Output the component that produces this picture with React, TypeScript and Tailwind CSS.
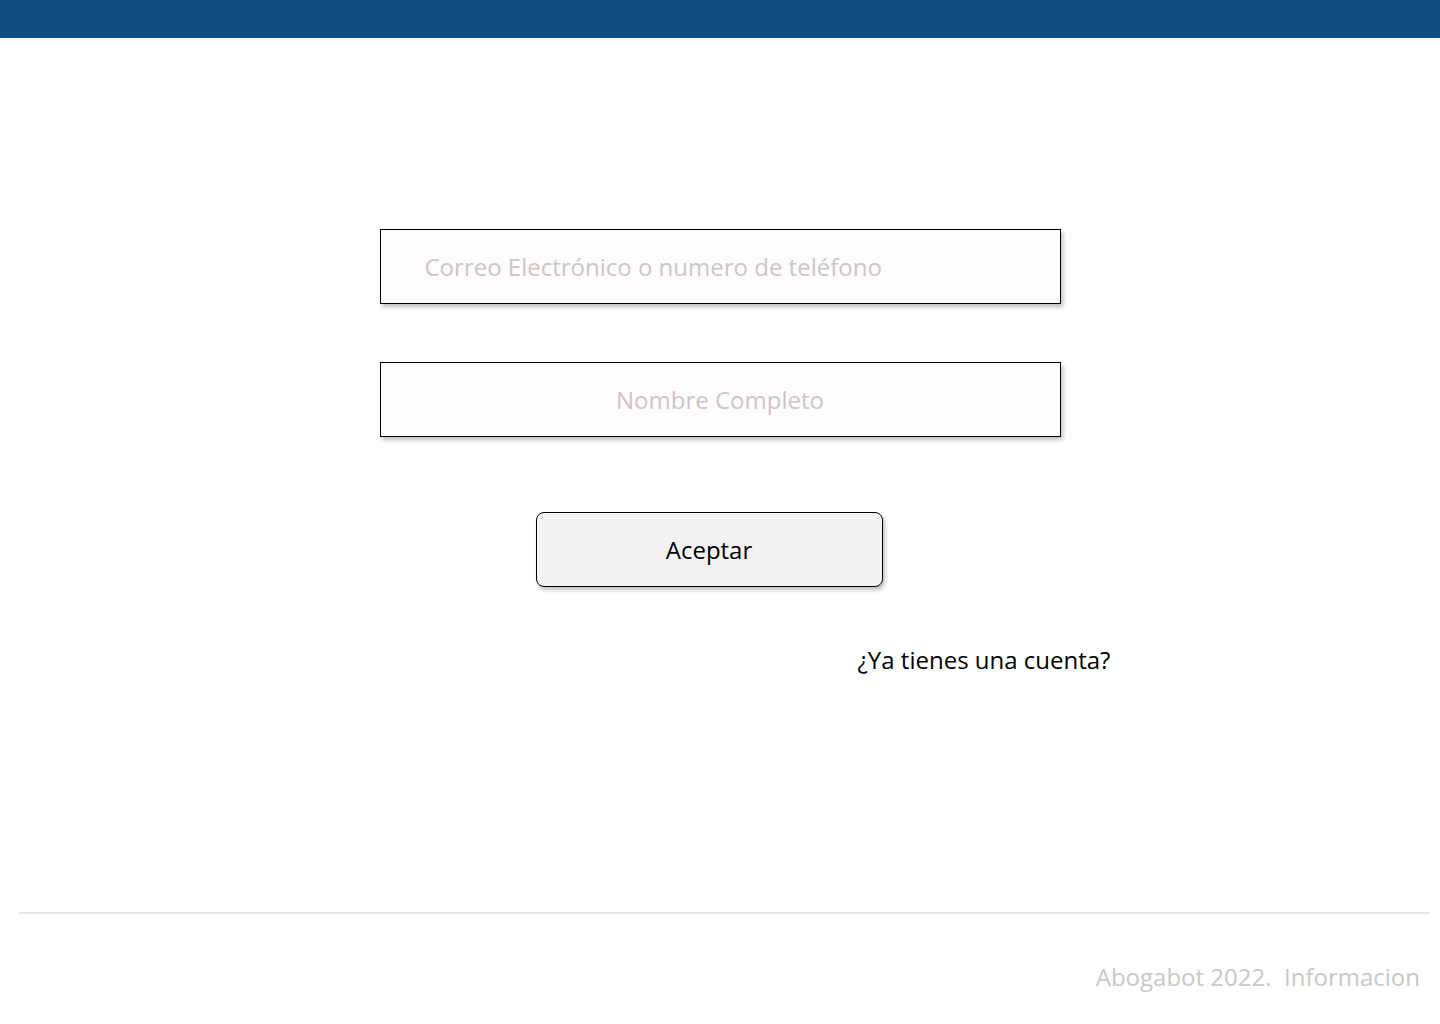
export default function App() {
  return (
    <div className="min-h-screen bg-white font-['Open_Sans',sans-serif]">
      {/* Top bar */}
      <header className="h-[38px] bg-[#114d82]" />

      <main className="flex flex-col items-center pt-[191px]">
        <div className="w-[681px]">
          <div className="flex h-[75px] items-center border border-black bg-[#fffcfd] pl-[44px] text-[24px] text-[#cfc4c6] shadow-[2px_3px_4px_rgba(0,0,0,0.25)]">
            Correo Electrónico o numero de teléfono
          </div>

          <div className="mt-[58px] flex h-[75px] items-center justify-center border border-black bg-[#fffcfd] text-[24px] text-[#cfc4c6] shadow-[2px_3px_4px_rgba(0,0,0,0.25)]">
            Nombre Completo
          </div>

          <div className="mt-[75px] pl-[156px]">
            <button
              type="button"
              className="flex h-[75px] w-[347px] items-center justify-center rounded-[8px] border border-black bg-[#f3f3f3] text-[24px] text-black shadow-[2px_3px_4px_rgba(0,0,0,0.25)]"
            >
              Aceptar
            </button>
          </div>

          <p className="mt-[57px] ml-[478px] whitespace-nowrap text-[24px] leading-[32px] text-black">
            ¿Ya tienes una cuenta?
          </p>
        </div>
      </main>

      {/* Footer */}
      <footer className="mt-[236px]">
        <div className="ml-[19px] mr-[10px] h-[2px] bg-[#e6e6e6]" />
        <p className="mt-[46px] pr-[20px] text-right text-[24px] leading-[34px] text-[#c8c8c8]">
          Abogabot 2022.&nbsp; Informacion
        </p>
      </footer>
    </div>
  );
}
